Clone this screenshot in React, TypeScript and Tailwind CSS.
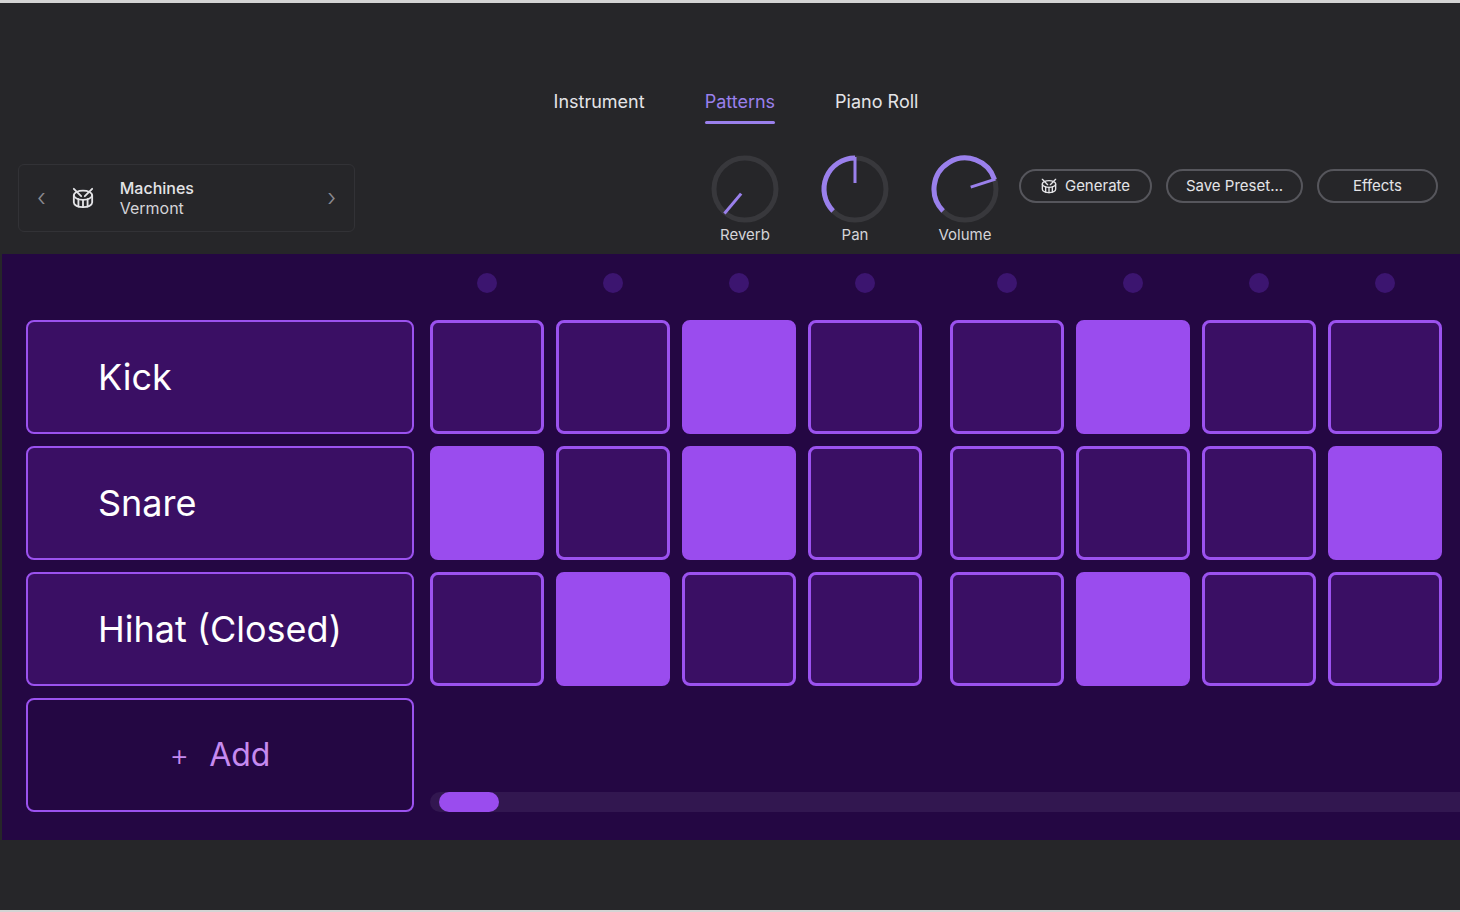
import React from "react";

const ACC = "#9a80ec";

function Knob({ value, label }: { value: number; label: string }) {
  // value angle in degrees from top, -135..135
  const r = 31, c = 35;
  const pt = (deg: number, rad: number) => {
    const a = ((deg - 90) * Math.PI) / 180;
    return [c + rad * Math.cos(a), c + rad * Math.sin(a)];
  };
  const [sx, sy] = pt(-135, r);
  const [ex, ey] = pt(value, r);
  const large = value + 135 > 180 ? 1 : 0;
  const [p1x, p1y] = pt(value, 6);
  const [p2x, p2y] = pt(value, r + 1);
  return (
    <div className="flex flex-col items-center w-[72px]">
      <svg width="70" height="70" viewBox="0 0 70 70">
        <circle cx={c} cy={c} r={r} fill="none" stroke="#38383c" strokeWidth="5" />
        {value > -134 && (
          <path d={`M${sx} ${sy} A${r} ${r} 0 ${large} 1 ${ex} ${ey}`} fill="none" stroke={ACC} strokeWidth="5" />
        )}
        <line x1={p1x} y1={p1y} x2={p2x} y2={p2y} stroke={ACC} strokeWidth="3" />
      </svg>
      <span className="text-[15px] text-[#d4d4d8] mt-[3px] leading-none">{label}</span>
    </div>
  );
}

function DrumIcon({ size = 24 }: { size?: number }) {
  return (
    <svg width={size} height={size} viewBox="0 0 24 24" fill="none" stroke="currentColor" strokeWidth="2" strokeLinecap="round" strokeLinejoin="round">
      <path d="m2 2 8 8" />
      <path d="m22 2-8 8" />
      <ellipse cx="12" cy="9" rx="10" ry="5" />
      <path d="M7 13.4v7.9" />
      <path d="M12 14v8" />
      <path d="M17 13.4v7.9" />
      <path d="M2 9v8a10 5 0 0 0 20 0V9" />
    </svg>
  );
}

const pattern = [
  [0, 0, 1, 0, 0, 1, 0, 0],
  [1, 0, 1, 0, 0, 0, 0, 1],
  [0, 1, 0, 0, 0, 1, 0, 0],
];
const names = ["Kick", "Snare", "Hihat (Closed)"];

function Pad({ on }: { on: number }) {
  return (
    <div
      className={
        "w-[114px] h-[114px] rounded-[8px] border-[3px] " +
        (on ? "bg-[#9a4cee] border-[#9a4cee]" : "bg-[#3a0f64] border-[#9b52ef]")
      }
    />
  );
}

export default function App() {
  return (
    <div className="w-[1460px] h-[912px] bg-[#262629] border-t-[3px] border-[#d4d4d4] flex flex-col overflow-hidden" style={{ fontFamily: "Inter, 'Noto Sans', sans-serif" }}>
      <div className="flex justify-center gap-[60px] pt-[90px] pl-[12px] text-[18px] h-[123px] text-[#e4e4e7]">
        <span className="leading-none">Instrument</span>
        <span className="flex flex-col leading-none text-[#9a80ec]">
          Patterns
          <span className="block h-[3px] bg-[#9a80ec] mt-[10px] rounded" />
        </span>
        <span className="leading-none">Piano Roll</span>
      </div>
      <div className="flex items-start h-[128px] pl-[18px] pr-[22px] pt-[38px]">
        <div className="w-[337px] h-[68px] rounded-[6px] border border-[#323236] flex items-center px-[18px] text-[#e4e4e7]">
          <span className="text-[#8a8a90] text-[24px] font-light leading-none">‹</span>
          <span className="ml-[26px] text-[#e4e4e7]"><DrumIcon size={22} /></span>
          <div className="ml-[26px] flex flex-col text-[16px] leading-[20px]">
            <span className="font-medium">Machines</span>
            <span className="text-[#d4d4d8]">Vermont</span>
          </div>
          <span className="ml-auto text-[#8a8a90] text-[24px] font-light leading-none">›</span>
        </div>
        <div className="ml-auto flex items-start gap-[38px] -mt-[10px]">
          <Knob value={-140} label="Reverb" />
          <Knob value={0} label="Pan" />
          <Knob value={72} label="Volume" />
        </div>
        <div className="flex gap-[14px] ml-[18px] mt-[5px] text-[15px] text-[#e4e4e7]">
          <div className="w-[133px] h-[34px] rounded-full border-2 border-[#56565c] flex items-center justify-center gap-[8px]">
            <DrumIcon size={16} />Generate
          </div>
          <div className="w-[137px] h-[34px] rounded-full border-2 border-[#56565c] flex items-center justify-center">Save Preset...</div>
          <div className="w-[121px] h-[34px] rounded-full border-2 border-[#56565c] flex items-center justify-center">Effects</div>
        </div>
      </div>
      <div className="ml-[2px] h-[586px] bg-[#240743] flex pt-[19px]">
        <div className="flex flex-col w-[428px] pl-[24px] pr-[16px] pt-[47px] gap-[12px]">
          {names.map((n) => (
            <div key={n} className="h-[114px] rounded-[8px] border-2 border-[#9b52ef] bg-[#3a0f64] flex items-center pl-[70px] text-white text-[36px]">{n}</div>
          ))}
          <div className="h-[114px] rounded-[8px] border-2 border-[#9b52ef] flex items-center justify-center gap-[20px] text-[#c68af0] text-[32px]">
            <span className="text-[30px] font-light">+</span>Add
          </div>
        </div>
        <div className="flex flex-col flex-1">
          <div className="flex gap-[28px]">
            {[0, 1].map((g) => (
              <div key={g} className="flex flex-col gap-[12px]">
                <div className="flex gap-[12px] h-[20px] mb-[15px]">
                  {[0, 1, 2, 3].map((i) => (
                    <div key={i} className="w-[114px] flex justify-center">
                      <div className="w-[20px] h-[20px] rounded-full bg-[#3c1570]" />
                    </div>
                  ))}
                </div>
                {pattern.map((row, ri) => (
                  <div key={ri} className="flex gap-[12px]">
                    {row.slice(g * 4, g * 4 + 4).map((v, i) => <Pad key={i} on={v} />)}
                  </div>
                ))}
              </div>
            ))}
          </div>
          <div className="mt-[106px] h-[20px] rounded-l-full bg-[#321750] flex items-center pl-[9px]">
            <div className="w-[60px] h-[20px] rounded-full bg-[#9a4cee]" />
          </div>
        </div>
      </div>
      <div className="flex-1" />
      <div className="h-[2px] bg-[#d4d4d4]" />
    </div>
  );
}
